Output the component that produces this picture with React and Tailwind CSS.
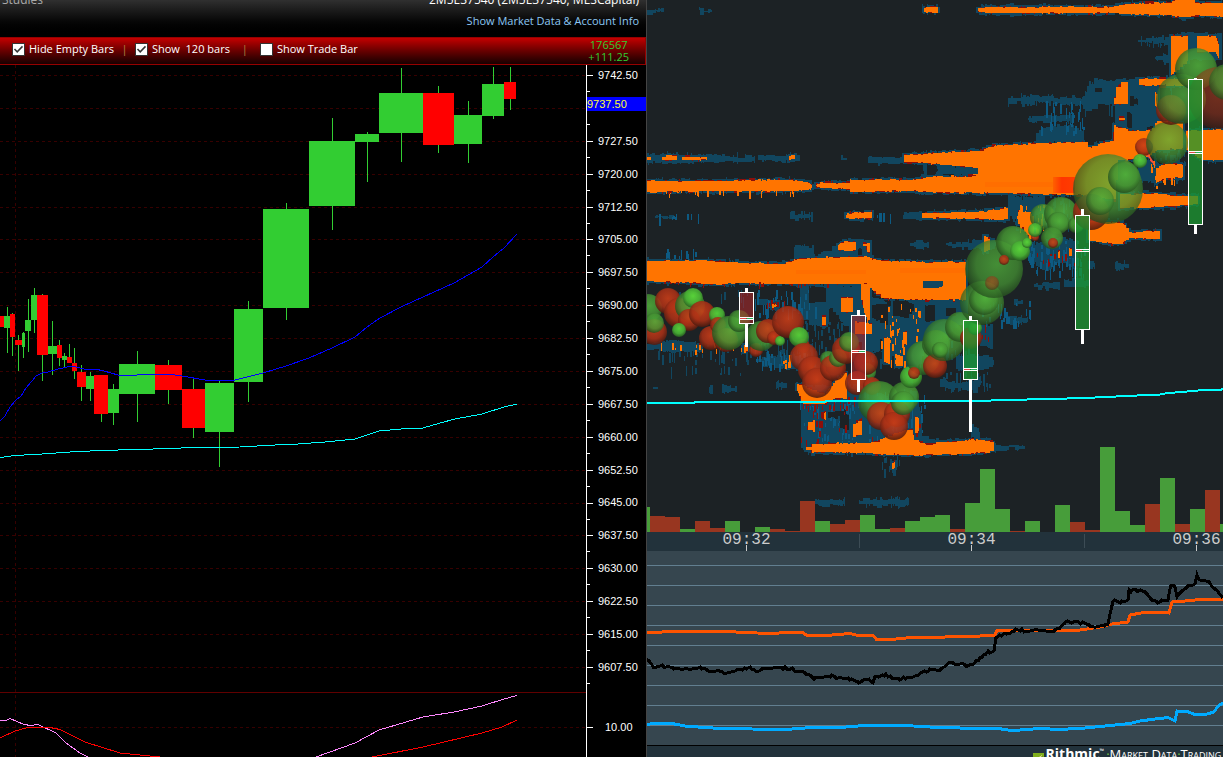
import React from "react";

/* ---------- left chart data ---------- */
// [x1, x2, top, bottom, rising, wickX, wickTop, wickBottom]
const CANDLES = [
  [0, 4, 316, 327, 0, 1, 316, 327], [4, 10, 316, 328, 1, 7, 307, 353], [10, 15, 314, 337, 0, 12, 313, 356],
  [15, 22, 340, 345, 0, 18, 335, 371], [22, 25, 333, 347, 1, 23, 332, 358], [25, 31, 320, 331, 1, 28, 299, 352],
  [31, 37, 295, 320, 1, 34, 288, 333], [37, 48, 295, 355, 0, 42, 294, 381], [48, 57, 346, 354, 1, 52, 321, 375],
  [57, 62, 345, 358, 0, 59, 340, 366], [62, 67, 356, 360, 1, 64, 353, 367], [67, 72, 357, 363, 0, 69, 344, 363],
  [72, 77, 363, 371, 0, 74, 348, 379], [77, 86, 372, 387, 0, 81, 365, 401], [86, 94, 376, 389, 1, 90, 372, 401],
  [94, 108, 375, 414, 0, 101, 375, 422], [108, 119, 389, 413, 1, 113, 384, 425], [119, 155, 364, 394, 1, 137, 351, 422],
  [155, 182, 365, 390, 0, 168, 360, 404], [182, 205, 389, 428, 0, 193, 378, 438], [205, 234, 383, 432, 1, 219, 381, 467],
  [234, 263, 309, 382, 1, 248, 301, 402], [263, 309, 209, 308, 1, 286, 203, 320], [309, 355, 141, 206, 1, 332, 118, 230],
  [355, 379, 134, 142, 1, 367, 132, 182], [379, 423, 93, 133, 1, 401, 68, 162], [423, 454, 93, 145, 0, 438, 86, 153],
  [454, 482, 115, 144, 1, 468, 101, 163], [482, 504, 84, 116, 1, 493, 67, 119], [504, 516, 82, 99, 0, 510, 67, 110],
];
const PRICES = Array.from({ length: 19 }, (_, i) => (9742.5 - i * 7.5).toFixed(2));
const GRID_Y = PRICES.map((_, i) => Math.round(75 + i * 32.89));

/* ---------- heat map helpers ---------- */
function rng(seed) {
  let s = seed * 7919 + 13;
  return () => {
    s = (s * 1103515245 + 12345) & 0x7fffffff;
    return (s >> 8) / 0x7fffff;
  };
}
function band(pts, grow, jitter, seed) {
  const r = rng(seed);
  const x0 = pts[0][0] - grow;
  const x1 = pts[pts.length - 1][0] + grow;
  const top = [];
  const bot = [];
  const at = (x, k) => {
    if (x <= pts[0][0]) return pts[0][k];
    for (let i = 1; i < pts.length; i++) {
      if (x <= pts[i][0]) {
        const a = pts[i - 1];
        const b = pts[i];
        return a[k] + ((b[k] - a[k]) * (x - a[0])) / (b[0] - a[0] || 1);
      }
    }
    return pts[pts.length - 1][k];
  };
  let x = x0;
  while (x < x1) {
    const w = Math.min(1 + Math.floor(r() * r() * 7), x1 - x);
    const a = r() < 0.3 ? jitter : jitter * 0.3;
    top.push([x, w, Math.round(at(x, 1) - grow - (r() - 0.5) * 2 * a)]);
    bot.push([x, w, Math.round(at(x, 2) + grow + (r() - 0.5) * 2 * a)]);
    x += w;
  }
  let d = `M${x0} ${top[0][2]}`;
  top.forEach(([px, w, y]) => { d += `V${y}H${px + w}`; });
  bot.reverse().forEach(([px, , y]) => { d += `V${y}H${px}`; });
  return d + "Z";
}
function speckle([x, y, w, h, n], seed, long = 10) {
  const r = rng(seed + 50);
  let d = "";
  for (let i = 0; i < n; i++) {
    const px = Math.round(x + r() * w);
    const hh = Math.round(2 + r() * long);
    const py = Math.round(y + r() * Math.max(1, h - hh));
    const ww = r() < 0.6 ? 1 : 2;
    d += `M${px} ${py}h${ww}v${hh}h-${ww}Z`;
  }
  return d;
}

const ORANGE = [
  [[924, 8, 12], [926, 7, 13], [936, 7, 13], [938, 9, 11]],
  [[978, 9, 11], [980, 7, 13], [1113, 7, 13], [1125, 4, 14], [1170, 3, 15], [1174, 0, 17], [1192, 0, 17], [1196, 3, 15], [1223, 3, 17]],
  [[646, 157, 160], [651, 158, 160]],
  [[662, 157, 160], [667, 155, 160], [677, 156, 160]],
  [[682, 157, 160], [707, 157, 160]],
  [[789, 156, 160], [795, 155, 159]],
  [[646, 181, 192], [700, 181, 191], [790, 180, 191], [807, 182, 190], [812, 185, 188]],
  [[816, 184, 187], [820, 183, 188], [849, 183, 189], [850, 180, 192], [910, 180, 191], [925, 177, 192], [980, 176, 193]],
  [[904, 155, 162], [950, 152, 165], [970, 152, 167]],
  [[970, 151, 167], [979, 151, 193], [992, 146, 193], [1040, 143, 194], [1084, 142, 195], [1086, 148, 196], [1112, 140, 200], [1114, 127, 200], [1118, 127, 160]],
  [[1114, 126, 160], [1130, 131, 160], [1150, 131, 155], [1156, 121, 150], [1183, 123, 148]],
  [[1114, 97, 104], [1116, 88, 104], [1121, 82, 104], [1128, 82, 104]],
  [[1119, 118, 120], [1125, 118, 120]],
  [[1139, 79, 85], [1190, 79, 86]],
  [[1171, 36, 75], [1188, 36, 60]],
  [[1197, 36, 52], [1215, 36, 52], [1219, 46, 60]],
  [[1155, 92, 106], [1158, 96, 106]],
  [[1186, 131, 150], [1200, 130, 160], [1223, 130, 160]],
  [[1156, 168, 183], [1164, 164, 178], [1183, 164, 178]],
  [[1120, 194, 208], [1160, 194, 207], [1175, 196, 206], [1198, 196, 204]],
  [[846, 214, 217], [849, 213, 219], [872, 212, 218]],
  [[922, 213, 218], [975, 212, 219], [1000, 209, 220], [1008, 208, 218]],
  [[1018, 212, 224], [1030, 212, 240], [1034, 220, 235]],
  [[1088, 222, 240], [1110, 222, 244], [1122, 222, 243], [1128, 232, 238], [1160, 231, 239]],
  [[838, 245, 250], [843, 241, 251], [856, 243, 250]],
  [[863, 244, 247], [870, 243, 253]],
  [[646, 261, 281], [664, 261, 282], [717, 261, 284], [740, 263, 283], [780, 264, 284], [796, 259, 284], [838, 257, 284], [865, 257, 284], [880, 261, 298], [923, 262, 300], [966, 262, 300]],
  [[861, 284, 300], [867, 284, 325], [870, 284, 310]],
  [[984, 236, 252], [990, 240, 248]],
  [[841, 297, 312], [853, 298, 312]],
  [[822, 317, 325], [826, 317, 325]],
  [[884, 338, 362], [890, 338, 364]],
  [[896, 356, 366], [903, 356, 366]],
  [[903, 332, 345], [907, 332, 345]],
  [[855, 322, 334], [872, 324, 334]],
  [[797, 384, 390], [802, 385, 404], [812, 390, 404], [824, 395, 404], [835, 380, 398], [845, 372, 398], [847, 385, 395]],
  [[808, 422, 430], [815, 420, 432]],
  [[824, 412, 420], [826, 412, 420]],
  [[853, 425, 436], [862, 418, 434]],
  [[915, 417, 433], [919, 418, 431]],
  [[806, 447, 450], [810, 444, 452], [870, 443, 453], [880, 439, 454], [905, 430, 455], [912, 430, 455], [914, 440, 455], [925, 444, 455], [945, 442, 454], [970, 440, 454], [988, 440, 451], [994, 445, 449]],
  [[892, 463, 469], [895, 462, 468]],
  [[675, 347, 350], [676, 347, 350]],
  [[699, 345, 350], [701, 345, 350]],
  [[744, 345, 352], [748, 345, 350]],
  [[772, 304, 308], [777, 305, 307]],
  [[1058, 251, 258], [1060, 251, 258]],
  [[1069, 248, 256], [1072, 249, 255]],
];
const BLUE = [
  [[646, 9, 12], [664, 9, 12]], [[699, 10, 12], [712, 10, 12]],
  [[646, 154, 163], [677, 155, 163], [705, 155, 162], [750, 155, 162], [755, 158, 160]],
  [[758, 155, 161], [785, 156, 161], [800, 155, 161]],
  [[868, 157, 163], [906, 157, 164]], [[841, 157, 160], [847, 157, 160]],
  [[903, 213, 219], [924, 212, 219]],
  [[790, 212, 220], [800, 214, 218], [811, 214, 217]], [[655, 216, 218], [674, 215, 219]],
  [[910, 242, 246], [925, 241, 250], [929, 242, 246]], [[946, 243, 246], [990, 238, 250], [996, 240, 246]],
  [[794, 246, 262], [812, 245, 262], [815, 257, 262], [832, 246, 260], [838, 242, 260], [845, 238, 258], [872, 240, 256]],
  [[925, 165, 174], [978, 167, 173]],
  [[1008, 98, 104], [1045, 96, 103], [1084, 98, 106]], [[1028, 116, 122], [1072, 115, 122]],
  [[1036, 130, 143], [1060, 124, 143], [1084, 130, 143]],
  [[1083, 96, 108], [1090, 82, 140], [1095, 80, 104], [1112, 80, 104], [1113, 80, 140], [1128, 78, 130], [1140, 78, 130], [1160, 76, 122]],
  [[1138, 40, 42], [1155, 38, 44], [1172, 37, 44]], [[1155, 57, 60], [1162, 54, 62], [1171, 54, 64]],
  [[1168, 35, 60], [1190, 32, 60], [1222, 34, 60]],
  [[1008, 195, 215], [1025, 198, 225], [1045, 196, 210]],
  [[1028, 245, 260], [1045, 240, 272], [1060, 238, 262], [1078, 240, 270]],
  [[1034, 284, 287], [1044, 282, 288], [1060, 282, 290]], [[1064, 279, 287], [1090, 278, 286]],
  [[1088, 263, 268], [1095, 263, 268]], [[1115, 262, 270], [1129, 264, 269]],
  [[1006, 316, 325], [1028, 318, 322]], [[1014, 300, 304], [1023, 301, 305]],
  [[980, 325, 345], [993, 325, 350]], [[956, 355, 370], [985, 355, 370], [994, 360, 365]],
  [[940, 380, 388], [958, 383, 388], [978, 380, 394]],
  [[800, 286, 318], [824, 285, 330], [828, 286, 305], [862, 286, 350], [866, 330, 355], [880, 336, 350]],
  [[868, 298, 340], [878, 298, 350], [900, 315, 360], [908, 300, 385], [925, 300, 350], [968, 298, 318]],
  [[801, 385, 448], [830, 385, 446], [860, 385, 442], [885, 395, 440], [915, 390, 445], [922, 420, 446]],
  [[922, 437, 446], [945, 440, 446]], [[971, 425, 440], [980, 432, 440]],
  [[990, 445, 451], [1027, 445, 449]],
  [[758, 358, 364], [790, 355, 370], [803, 360, 366]], [[776, 382, 388], [787, 382, 388]],
  [[722, 384, 393], [737, 387, 392]], [[709, 386, 392], [713, 386, 392]], [[653, 387, 391], [658, 387, 391]],
  [[646, 344, 350], [670, 340, 352], [700, 344, 352]], [[758, 298, 305], [780, 302, 308]],
  [[815, 499, 504], [822, 500, 506], [845, 500, 505]],
  [[859, 501, 504], [871, 500, 505], [876, 497, 507], [886, 501, 504], [893, 497, 507], [909, 501, 505]],
  [[1138, 158, 180], [1156, 162, 184], [1158, 160, 178]],
];
const HOLES = [
  [[926, 163, 176], [937, 163, 176]], [[809, 286, 303], [826, 288, 302]], [[872, 305, 318], [886, 304, 326], [888, 305, 314]],
  [[893, 303, 315], [905, 302, 318], [914, 304, 310]], [[880, 340, 352], [888, 335, 348]], [[840, 412, 428], [849, 416, 430]],
  [[828, 412, 418], [846, 410, 416]], [[1086, 110, 138], [1108, 108, 138]], [[1095, 88, 92], [1102, 88, 92]],
  [[1130, 96, 106], [1138, 98, 104]], [[1127, 112, 128], [1132, 114, 128]], [[925, 305, 322], [935, 305, 320]], [[946, 308, 316], [956, 308, 316]],
  [[858, 248, 255], [862, 246, 255]],
];
const SPECKS = [
  [660, 248, 36, 18, 14], [795, 240, 12, 24, 6], [665, 288, 90, 24, 12], [755, 290, 60, 30, 45], [655, 340, 160, 26, 70], [670, 366, 80, 10, 10],
  [755, 350, 60, 22, 40], [795, 320, 65, 50, 60], [868, 300, 100, 70, 110], [800, 390, 125, 60, 110], [880, 455, 20, 24, 12],
  [1008, 93, 30, 14, 12], [1040, 100, 44, 36, 40], [1084, 78, 90, 50, 60], [1010, 192, 60, 40, 60], [1025, 240, 60, 40, 70],
  [1138, 36, 34, 12, 10], [1150, 150, 35, 34, 40], [980, 300, 50, 30, 26], [940, 370, 50, 24, 30], [1120, 100, 60, 45, 40], [655, 213, 45, 8, 10],
  [858, 496, 52, 12, 16], [789, 211, 24, 10, 8], [875, 213, 16, 7, 5],
];
const WARM_SPECKS = [
  [660, 280, 200, 5, 26], [660, 343, 90, 12, 14], [765, 300, 20, 10, 8], [780, 355, 12, 16, 8], [800, 392, 55, 28, 34], [880, 300, 40, 70, 40],
  [800, 418, 120, 30, 22], [1012, 205, 40, 30, 26], [1030, 250, 50, 18, 14], [1150, 160, 25, 30, 20], [970, 325, 18, 24, 8], [660, 190, 140, 4, 20],
];

// [cx, cy, r, kind]: 0 red, 1 green, 2 bright green, 3 glassy green, 4 glassy red
const BALLS = [
  [648, 308, 14, 1], [668, 301, 13, 0], [654, 332, 13, 0], [654, 323, 10, 1], [679, 313, 15, 0], [690, 306, 15, 1], [693, 298, 10, 2],
  [689, 320, 11, 0], [679, 330, 7, 2], [702, 314, 13, 0], [711, 338, 12, 0], [717, 315, 8, 2], [718, 325, 8, 0], [726, 340, 12, 0],
  [729, 333, 17, 1], [739, 321, 11, 1], [756, 350, 7, 0], [761, 336, 15, 1], [768, 331, 12, 0], [774, 338, 7, 0], [780, 341, 5, 2],
  [788, 322, 16, 0], [803, 346, 7, 0], [799, 337, 10, 2], [804, 357, 14, 0], [812, 370, 14, 0], [817, 383, 15, 0], [828, 359, 8, 1],
  [833, 368, 13, 0], [838, 358, 9, 1], [846, 350, 14, 0], [849, 342, 10, 1], [867, 372, 9, 1], [866, 363, 12, 0], [857, 383, 12, 0],
  [872, 386, 9, 0], [879, 402, 21, 1], [904, 397, 15, 1], [881, 416, 14, 0], [897, 414, 13, 0], [894, 426, 14, 0], [903, 403, 12, 1],
  [911, 377, 11, 2], [923, 358, 17, 1], [914, 373, 6, 0], [936, 344, 14, 1], [935, 366, 12, 0], [944, 340, 21, 3], [940, 350, 8, 1],
  [960, 327, 15, 1], [971, 338, 11, 0], [975, 328, 7, 2], [982, 303, 22, 3], [984, 300, 15, 1], [994, 269, 29, 3], [992, 283, 7, 4],
  [1013, 243, 17, 1], [1004, 260, 5, 0], [1020, 251, 10, 2], [1027, 243, 5, 2], [1035, 237, 4, 0], [1043, 217, 13, 1], [1035, 230, 7, 2],
  [1061, 214, 17, 1], [1058, 223, 11, 1], [1052, 238, 11, 1], [1053, 243, 5, 0], [1076, 225, 8, 1],
  [1091, 212, 18, 0], [1108, 189, 35, 3], [1100, 201, 14, 3], [1124, 177, 16, 1],
  [1144, 147, 9, 0], [1140, 161, 7, 2], [1167, 143, 21, 3], [1171, 110, 15, 0], [1181, 99, 25, 3], [1196, 69, 21, 1], [1219, 98, 31, 4], [1227, 82, 18, 3],
];
const BALL_FILL = ["url(#ballRed)", "url(#ballGreen)", "url(#ballLime)", "url(#ballGreen)", "url(#ballRed)"];
const BALL_OPACITY = [0.88, 0.84, 0.92, 0.74, 0.5];

// [x, bodyTop, bodyBottom, wickTop, wickBottom, closeLine, rising]
const MINUTES = [
  [739, 293, 323, 288, 347, 318, 0], [851, 316, 379, 310, 392, 351, 0], [963, 321, 379, 316, 432, 369, 1],
  [1075, 216, 329, 209, 344, 250, 1], [1188, 80, 224, 78, 234, 152, 1],
];
const VOLUME = [
  [635, 507, 1], [650, 516, 0], [665, 517, 0], [680, 529, 1], [695, 521, 0], [710, 528, 0], [725, 521, 1], [755, 527, 1], [770, 529, 0],
  [785, 531, 0], [800, 501, 0], [815, 521, 1], [830, 524, 0], [845, 520, 0], [860, 515, 1], [875, 529, 1], [890, 528, 0], [905, 521, 1],
  [920, 517, 1], [935, 515, 1], [950, 529, 0], [965, 503, 1], [980, 469, 1], [995, 509, 1], [1010, 531, 0], [1025, 521, 1], [1055, 505, 1],
  [1070, 522, 0], [1085, 530, 0], [1100, 447, 1], [1115, 511, 1], [1130, 525, 1], [1145, 504, 0], [1160, 478, 1], [1175, 524, 0],
  [1190, 509, 1], [1205, 490, 0], [1220, 524, 1],
];

const BLACK_PTS = [
  [646, 660], [650, 662], [653, 667], [660, 665], [680, 669], [700, 668], [712, 672], [718, 670], [725, 673], [735, 670], [750, 668], [757, 671], [765, 668],
  [785, 668], [802, 671], [814, 678], [832, 676], [850, 679], [859, 682], [867, 679], [873, 682], [875, 677], [884, 675], [900, 679], [915, 676], [932, 669],
  [940, 671], [948, 663], [962, 664], [966, 666], [977, 661], [984, 654], [994, 650], [996, 636], [1005, 634], [1016, 630], [1026, 631], [1038, 629], [1052, 631],
  [1060, 628], [1064, 623], [1075, 621], [1088, 625], [1094, 628], [1108, 624], [1110, 613], [1113, 600], [1120, 602], [1128, 601], [1129, 591], [1137, 590],
  [1146, 593], [1150, 599], [1158, 602], [1168, 599], [1171, 585], [1175, 586], [1177, 596], [1187, 587], [1195, 584], [1197, 575], [1200, 580], [1208, 581], [1216, 590], [1223, 598],
];
function noisy(pts, amp, seed) {
  const r = rng(seed);
  const out = [];
  for (let i = 1; i < pts.length; i++) {
    const [ax, ay] = pts[i - 1];
    const [bx, by] = pts[i];
    const n = Math.max(1, Math.round((bx - ax) / 2));
    for (let k = 0; k < n; k++) {
      out.push(`${ax + ((bx - ax) * k) / n},${Math.round(ay + ((by - ay) * k) / n + (r() - 0.5) * 2 * amp)}`);
    }
  }
  out.push(pts[pts.length - 1].join(","));
  return out.join(" ");
}

function Tick({ label, checked }) {
  return (
    <label className="flex items-center gap-1">
      <span className="grid size-[13px] place-items-center">
        <input type="checkbox" defaultChecked={checked} className="peer col-start-1 row-start-1 size-[13px] appearance-none border border-[#333] bg-white" />
        <svg viewBox="0 0 13 13" className="pointer-events-none invisible col-start-1 row-start-1 size-[13px] peer-checked:visible" fill="none" stroke="#333" strokeWidth="1.5">
          <path d="M2.5 6 5.2 8.8 10.5 3.4" />
        </svg>
      </span>
      <span className="whitespace-pre">{label}</span>
    </label>
  );
}

function Header() {
  return (
    <header className="h-[37px] overflow-hidden bg-linear-to-b from-[#303030] to-black text-[11px]">
      <div className="-mt-2 flex h-4 items-center justify-between pr-[7px] pl-[2px] leading-4">
        <button className="text-[12px] text-[#aaa]">Studies</button>
        <span className="text-[12px] font-medium text-white">2M5E37540 (2M5E37540, MESCapital)</span>
      </div>
      <div className="mt-[5px] flex justify-end pr-[7px] leading-4">
        <a href="#account" className="font-medium text-[#8cc8f4]">Show Market Data &amp; Account Info</a>
      </div>
    </header>
  );
}

function Toolbar() {
  return (
    <div className="flex h-7 items-center justify-between border-y border-r border-[#960000] bg-linear-to-b from-[#c40000] to-[#180000] pr-4 pl-3 text-[11px] text-white">
      <div className="flex items-center pb-1 leading-4">
        <Tick label="Hide Empty Bars" checked />
        <span className="w-[21px] text-center text-[#b08040]">|</span>
        <Tick label="Show  120 bars" checked />
        <span className="w-[30px] text-center text-[#b08040]">|</span>
        <Tick label="Show Trade Bar" checked={false} />
      </div>
      <div className="text-center leading-3 font-medium text-[#32cd32]">
        <div>176567</div>
        <div>+111.25</div>
      </div>
    </div>
  );
}

function PriceChart() {
  return (
    <div className="flex min-h-0 grow">
      <svg viewBox="0 65 586 692" preserveAspectRatio="none" className="h-full min-w-0 grow basis-0" shapeRendering="crispEdges" role="img" aria-label="Price chart">
        <g stroke="#370000" strokeDasharray="3 3">
          {GRID_Y.map((y) => <path key={y} d={`M0 ${y + 0.5}H586`} />)}
          <path d="M0 727.5H586M15.5 65V757" />
        </g>
        <path d="M0 692.5H586" stroke="#600000" />
        {CANDLES.map(([x1, x2, t, b, up, wx, wt, wb]) => (
          <g key={x1}>
            <rect x={wx} y={wt} width="1" height={wb - wt} fill="#32cd32" />
            <rect x={x1} y={t} width={x2 - x1} height={b - t} fill={up ? "#32cd32" : "#f00"} />
          </g>
        ))}
        <polyline fill="none" stroke="#00f" points="0,421 5,416 10,407 16,400 21,396 26,388 32,381 36,376 42,373 48,372 58,369 72,366 84,369 95,369 104,371 118,375 137,375 138,374 168,374 182,376 205,380 235,380 263,373 286,366 309,358 332,348 355,337 367,327 380,318 401,307 423,297 454,283 468,275 482,267 493,257 504,248 517,234" />
        <polyline fill="none" stroke="#0ff" points="0,457.5 15,455.5 42,454 70,452 100,450.5 137,449.5 170,448.5 193,447.5 240,447 275,445 298,444 325,442 355,439 367,435 379,431 401,429 423,428 440,423 455,419 482,414 504,407 517,404" />
        <polyline fill="none" stroke="#f8f" points="0,720.5 6,720.5 10,718.5 24,724.5 31,725.5 38,724.5 56,733 66,743 80,753 88,757 316,757 355,743 379,730 423,717 454,712 482,706 504,699 517,695.5" />
        <polyline fill="none" stroke="#f00" points="0,738 15,731 28,727.5 50,727.5 60,729.5 85,742 120,753 160,757 372,757 423,747 482,733 502,727 517,720" />
      </svg>
      <div className="flex w-[60px] flex-none flex-col font-['Liberation_Sans',sans-serif] text-[11px] leading-[14px] text-white">
        <div className="relative flex min-h-0 grow">
          <AxisTicks />
          <ul className="flex grow flex-col justify-between pt-[3px] pb-[19px]">
            {PRICES.map((p, i) => <li key={p} className="h-[14px] pl-1">{i === 1 ? "" : p}</li>)}
          </ul>
          <div className="absolute top-[32px] right-0 left-[1px] h-[14px] bg-[#0000ff] text-[#ffff33]">9737.50</div>
        </div>
        <div className="flex h-[64px] border-l border-white">
          <span className="mt-[34px] h-px w-[6px] bg-white" />
          <span className="mt-[27px] pl-[12px]">10.00</span>
        </div>
      </div>
    </div>
  );
}

function AxisTicks() {
  return (
    <svg viewBox="0 65 8 628" preserveAspectRatio="none" className="h-full w-2 flex-none" shapeRendering="crispEdges" aria-hidden="true">
      <path d="M0.5 65V693" stroke="#fff" />
      {GRID_Y.map((y) => <path key={y} d={`M0 ${y + 0.5}h7M0 ${y + 16.5}h4`} stroke="#fff" />)}
    </svg>
  );
}

function HeatMap() {
  return (
    <svg viewBox="646 0 577 532" preserveAspectRatio="none" className="min-h-0 w-full grow basis-0 bg-[#1c2225]" role="img" aria-label="Order book heat map">
      <defs>
        <radialGradient id="ballRed" cx="0.5" cy="0.4" r="0.6">
          <stop offset="0" stopColor="#cc3e18" /><stop offset="0.6" stopColor="#a83016" /><stop offset="1" stopColor="#4e1a0e" />
        </radialGradient>
        <radialGradient id="ballGreen" cx="0.55" cy="0.42" r="0.6">
          <stop offset="0" stopColor="#52b43c" /><stop offset="0.6" stopColor="#459433" /><stop offset="1" stopColor="#22481c" />
        </radialGradient>
        <radialGradient id="ballLime" cx="0.5" cy="0.4" r="0.6">
          <stop offset="0" stopColor="#5ad83a" /><stop offset="0.6" stopColor="#48b034" /><stop offset="1" stopColor="#275c20" />
        </radialGradient>
        <linearGradient id="hot"><stop offset="0" stopColor="#ff5a00" /><stop offset="0.4" stopColor="#ff2000" /><stop offset="1" stopColor="#ff2a00" /></linearGradient>
      </defs>
      <g shapeRendering="crispEdges">
        {BLUE.map((p, i) => <path key={i} d={band(p, 0, 3, i + 1)} fill="#11465f" />)}
        {SPECKS.map((s, i) => <path key={i} d={speckle(s, i)} fill={i % 3 ? "#11465f" : "#0d5a82"} />)}
        {HOLES.map((p, i) => <path key={i} d={band(p, 0, 2, i + 90)} fill="#1c2225" />)}
        {ORANGE.map((p, i) => <path key={i} d={band(p, 2, 2, i + 200)} fill="#11465f" />)}
        {WARM_SPECKS.map((s, i) => <path key={i} d={speckle(s, i + 40, 6)} fill={i % 2 ? "#ff7400" : "#8c0f0a"} />)}
        {ORANGE.map((p, i) => <path key={i} d={band(p, 0, 2.4, i + 300)} fill="#8c0f0a" />)}
        {ORANGE.map((p, i) => <path key={i} d={band(p, 0, 1.2, i + 400)} fill="#ff7400" />)}
        <path d="M923 165h10l4 3h41v6h-40l-4 2h-10zM923 281h20v5l-6 2h-14z" fill="#11465f" />
        <path d="M927 165h9l2 5-3 5h-8z" fill="#1c2225" />
        <path d="M796 270h70v4H796zM900 268h65v5h-65zM985 182h68v5h-68z" fill="#ff6a00" opacity="0.6" />
        <rect x="1053" y="177" width="22" height="16" fill="url(#hot)" opacity="0.75" />
      </g>
      <path d="M1126 160l6 6-8-4zM1147 152l8 12-8-8zM1150 156l6 10-6-5z" fill="#f05040" />
      {BALLS.map(([cx, cy, r, k], i) => <circle key={i} cx={cx} cy={cy} r={r} fill={BALL_FILL[k]} opacity={BALL_OPACITY[k]} />)}
      <polyline shapeRendering="crispEdges" fill="none" stroke="#0ff" strokeWidth="2" points="646,403 694,403 695,402 825,402 826,401 990,401 992,400 1026,400 1028,399 1066,399 1068,398 1094,398 1096,397 1115,397 1117,396 1136,396 1138,395 1159,395 1161,394 1170,393 1181,392 1194,391 1203,390 1220,390 1223,389" />
      <g shapeRendering="crispEdges">
        {MINUTES.map(([x, t, b, wt, wb, c, up]) => (
          <g key={x}>
            <path d={`M${x + 6} ${wt}h3v${t - wt}h-3zM${x + 6} ${b}h3v${wb - b}h-3z`} fill="#fff" />
            <rect x={x + 0.5} y={t - 0.5} width="14" height={b - t + 1} fill={up ? "#1c9a32" : "#a8282c"} fillOpacity={up ? 0.75 : 0.6} stroke="#fff" />
            <path d={`M${x} ${c - 0.5}h15M${x} ${c + 1.5}h15`} stroke="#fff" />
            <path d={`M${x + 1} ${c + 0.5}h6`} stroke="#e04848" /><path d={`M${x + 8} ${c + 0.5}h6`} stroke="#28b060" />
          </g>
        ))}
        {VOLUME.map(([x, y, g]) => <rect key={x} x={x} y={y} width="15" height={532 - y} fill={g ? "#479d3a" : "#983620"} />)}
      </g>
    </svg>
  );
}

function TimeAxis() {
  return (
    <div className="flex h-[19px] flex-none overflow-x-clip bg-[#22323b] font-['Liberation_Mono',monospace] text-[16px] leading-[17px] text-[#ccc]">
      <div className="-ml-3 flex">
        {["09:32", "09:34", "09:36"].map((t, i) => (
          <div key={t} className="flex w-[225px] flex-none flex-col items-center">
            <time className="h-[13px]">{t}</time>
            <span className="h-[6px] w-px bg-[#ccc]" />
            {i > 0 && <span className="-mt-[17px] h-[14px] w-px self-start bg-[#3c4c55]" />}
          </div>
        ))}
      </div>
    </div>
  );
}

function Indicators() {
  return (
    <svg viewBox="646 551 577 194" preserveAspectRatio="none" className="h-[194px] w-full flex-none bg-[#36464f]" shapeRendering="crispEdges" role="img" aria-label="Indicators">
      {[565, 585, 605, 625, 645, 665, 685, 705, 725].map((y) => <path key={y} d={`M646 ${y + 0.5}H1223`} stroke="#627f90" />)}
      <g fill="none" strokeWidth="3">
        <polyline stroke="#ff5400" points="646,632.5 662,632 664,631.5 710,632 725,631.5 757,633 778,633.5 780,632.5 803,632.5 806,635 826,635.5 850,633.5 856,635 874,636 876,639 896,639 916,637 945,637 980,636 995,635 997,630 1030,630 1080,630 1100,627 1112,624 1128,622 1130,615 1147,612 1169,613 1172,602 1185,601 1200,599.5 1223,600" />
        <polyline stroke="#000" points={noisy(BLACK_PTS, 1.2, 5)} />
        <polyline stroke="#0af" points="646,724 650,724 660,723 672,723.5 685,726 705,727.5 720,728.5 752,729 785,729.5 792,729 805,728 840,727.5 858,726 875,725.5 905,725.5 930,727 960,728 995,728 1008,730 1020,730 1040,728.5 1060,729.5 1085,728 1105,726 1130,723.5 1140,721 1155,719 1168,717.5 1175,721 1177,711 1187,711.5 1195,714.5 1205,714.5 1214,712 1218,706 1223,703" />
      </g>
    </svg>
  );
}

function Brand() {
  return (
    <footer className="h-3 flex-none overflow-hidden border-t border-black bg-[#22323b] pl-[67%]">
      <div className="flex h-4 items-center gap-[2px] text-[14px] leading-4 whitespace-nowrap text-white">
        <svg viewBox="0 0 12 12" className="mt-2 size-[11px] flex-none" aria-hidden="true">
          <rect width="12" height="12" fill="#7fae1c" /><path d="M2 8h3l3-5h2v9H8V7l-3 3H2z" fill="#1c2b10" /><path d="M4 6l6-4-2 6z" fill="#e8f27a" />
        </svg>
        <b className="font-bold">Rithmic</b>
        <span className="-ml-[2px] self-start pt-[2px] text-[6px] leading-[6px]">™</span>
        <span className="text-[13px] [font-variant:small-caps]"><span className="text-[#6fc043]">·</span>Market Data<span className="text-[#6fc043]">·</span>Trading In</span>
      </div>
    </footer>
  );
}

export default function App() {
  return (
    <main className="grid h-screen grid-cols-[646fr_577fr] overflow-hidden bg-black font-['Open_Sans','Noto_Sans',sans-serif]">
      <section className="flex min-h-0 min-w-0 flex-col">
        <Header />
        <Toolbar />
        <PriceChart />
      </section>
      <section className="relative flex min-h-0 min-w-0 flex-col">
        <HeatMap />
        <TimeAxis />
        <Indicators />
        <Brand />
        <div className="absolute inset-y-0 left-0 w-px bg-[#444]" />
      </section>
    </main>
  );
}
